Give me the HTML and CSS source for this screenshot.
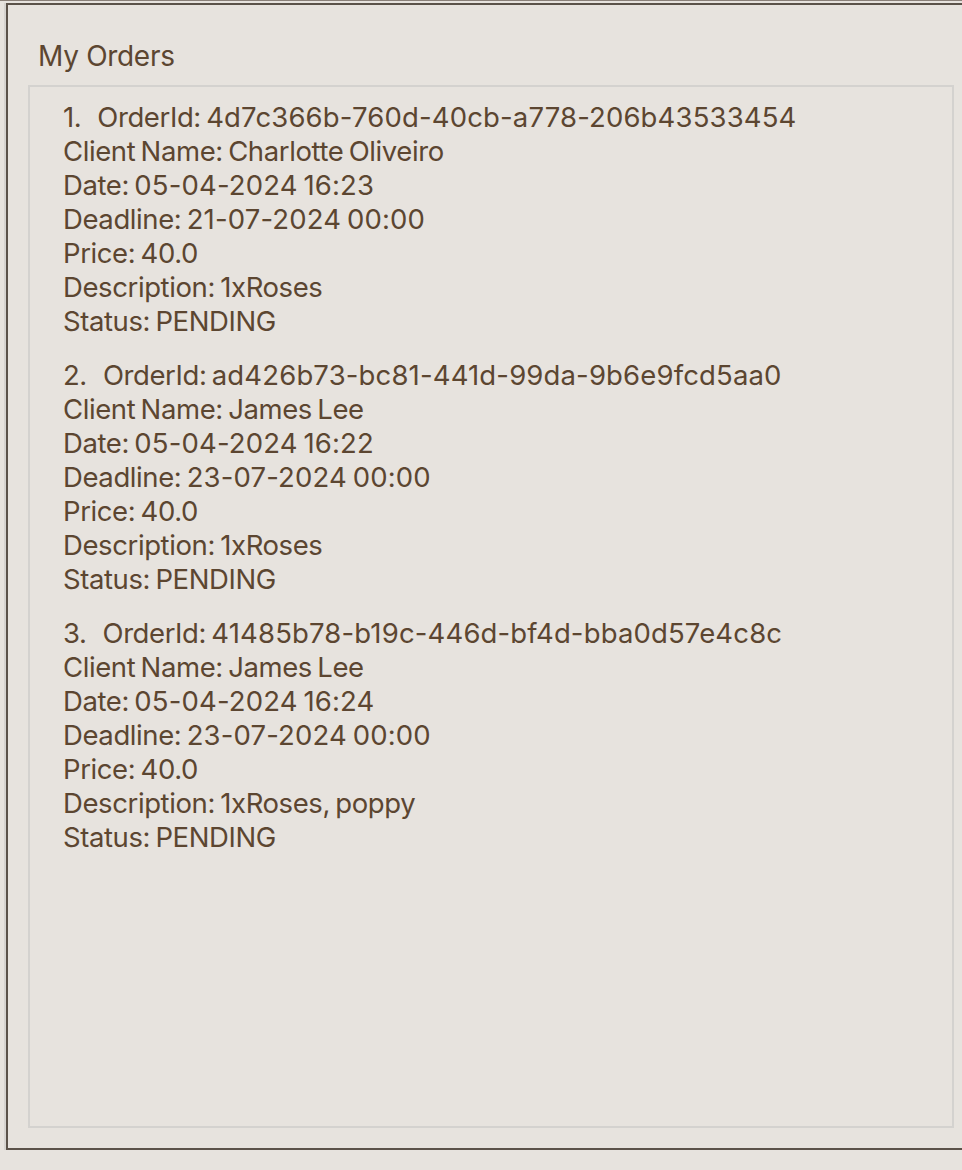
FILE: index.html
```html
<!DOCTYPE html>
<html>
<head>
<meta charset="utf-8">
<link rel="stylesheet" href="styles.css">
</head>
<body>
<div class="topline"></div>
<div class="page">
  <div class="panel">
    <h1 class="title">My Orders</h1>
    <div class="list">
      <div class="order">
        <div class="line"><span class="num">1.</span>OrderId: <span class="val">4d7c366b-760d-40cb-a778-206b43533454</span></div>
        <div class="line">Client Name: Charlotte Oliveiro</div>
        <div class="line">Date: <span class="val">05-04-2024 16:23</span></div>
        <div class="line">Deadline: <span class="val">21-07-2024 00:00</span></div>
        <div class="line">Price: 40.0</div>
        <div class="line">Description: 1xRoses</div>
        <div class="line">Status: PENDING</div>
      </div>
      <div class="order">
        <div class="line"><span class="num">2.</span>OrderId: <span class="val">ad426b73-bc81-441d-99da-9b6e9fcd5aa0</span></div>
        <div class="line">Client Name: James Lee</div>
        <div class="line">Date: <span class="val">05-04-2024 16:22</span></div>
        <div class="line">Deadline: <span class="val">23-07-2024 00:00</span></div>
        <div class="line">Price: 40.0</div>
        <div class="line">Description: 1xRoses</div>
        <div class="line">Status: PENDING</div>
      </div>
      <div class="order">
        <div class="line"><span class="num">3.</span>OrderId: <span class="val">41485b78-b19c-446d-bf4d-bba0d57e4c8c</span></div>
        <div class="line">Client Name: James Lee</div>
        <div class="line">Date: <span class="val">05-04-2024 16:24</span></div>
        <div class="line">Deadline: <span class="val">23-07-2024 00:00</span></div>
        <div class="line">Price: 40.0</div>
        <div class="line">Description: 1xRoses, poppy</div>
        <div class="line">Status: PENDING</div>
      </div>
    </div>
  </div>
</div>
</body>
</html>
```
FILE: styles.css
```css
html, body {
  margin: 0;
  padding: 0;
}
body {
  background: #e7e3de;
  font-family: Inter, "Noto Sans", sans-serif;
  color: #5c4631;
  width: 962px;
  height: 1170px;
  overflow: hidden;
}
.topline {
  height: 1px;
  background: #8a8078;
}
.page {
  padding: 2px 0 0 6px;
}
.panel {
  border: 2px solid #5b5249;
  border-right: 0;
  box-shadow: -2px 0 0 #d6d3cf;
  height: 1147px;
  box-sizing: border-box;
  padding: 0 0 0 20px;
  display: flex;
  flex-direction: column;
}
.title {
  margin: 0;
  font-weight: 400;
  font-size: 28px;
  line-height: 34px;
  letter-spacing: -0.3px;
  padding: 34px 0 12px 10px;
}
.list {
  width: 926px;
  height: 1043px;
  box-sizing: border-box;
  border: 2px solid #d4d2cf;
  padding: 13px 0 0 33px;
  display: flex;
  flex-direction: column;
  gap: 20px;
}
.line {
  font-size: 27.5px;
  line-height: 34px;
  letter-spacing: -0.4px;
  word-spacing: -2px;
  white-space: nowrap;
}
.val {
  letter-spacing: 0.15px;
}
.num {
  display: inline-block;
  margin-right: 16px;
}
```
